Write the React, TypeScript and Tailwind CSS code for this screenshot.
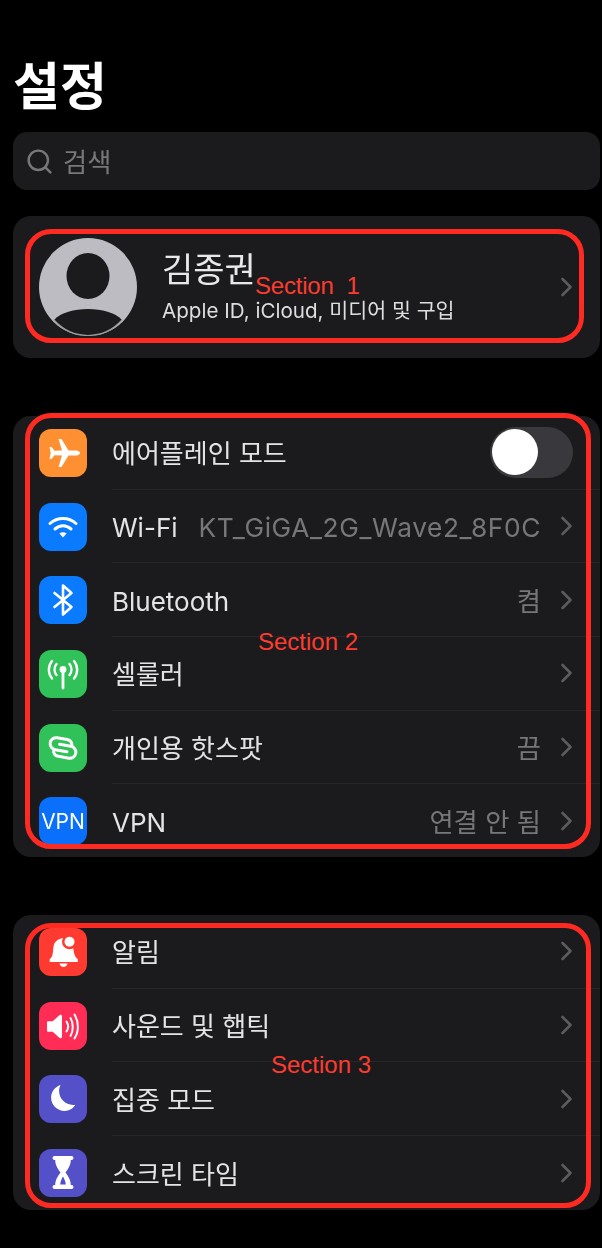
import { Search } from "lucide-react";
import type { ReactNode } from "react";

const font = "font-['Inter','Noto_Sans_CJK_KR',sans-serif]";

function AirplaneIcon() {
  return (
    <svg viewBox="0 0 48 48" className="h-12 w-12" fill="#fff">
      <path d="M41 24c0-1.500-2-2.600-4-2.600h-7.500L22.500 10h-3l3.500 11.400-7.500.4-3-3.800h-2l1.200 6-1.200 6h2l3-3.800 7.500.4-3.500 11.400h3l7-11.400H37c2 0 4-1.100 4-2.600z" />
    </svg>
  );
}

function WifiIcon() {
  return (
    <svg viewBox="0 0 48 48" className="h-12 w-12" fill="none" stroke="#fff" strokeWidth="3" strokeLinecap="round">
      <path d="M11 20.500c7.500-6.700 18.500-6.700 26 0" />
      <path d="M16 26c4.800-4.200 11.200-4.200 16 0" />
      <path d="M24 34.500l-3.600-4c2.200-1.600 5-1.600 7.200 0z" fill="#fff" stroke="none" />
    </svg>
  );
}

function BluetoothIcon() {
  return (
    <svg viewBox="0 0 48 48" className="h-12 w-12" fill="none" stroke="#fff" strokeWidth="2.600" strokeLinecap="round" strokeLinejoin="round">
      <path d="M15.500 17L32.500 31 24 38.500v-29L32.500 17 15.500 31" />
    </svg>
  );
}

function CellularIcon() {
  return (
    <svg viewBox="0 0 48 48" className="h-12 w-12" fill="none" stroke="#fff" strokeWidth="2.400" strokeLinecap="round">
      <circle cx="24" cy="19.500" r="3.400" fill="#fff" stroke="none" />
      <path d="M24 21v17" strokeWidth="2.800" />
      <path d="M17.500 14c-2.600 3.200-2.600 7.800 0 11M30.500 14c2.600 3.200 2.600 7.800 0 11" />
      <path d="M13 11c-4.200 5-4.200 12.500 0 17.500M35 11c4.200 5 4.200 12.500 0 17.500" />
    </svg>
  );
}

function HotspotIcon() {
  return (
    <svg viewBox="0 0 48 48" className="h-12 w-12" fill="none" stroke="#fff" strokeWidth="3" strokeLinecap="round">
      <g transform="rotate(10 24 24)">
        <path d="M28.500 27h-12a6 6 0 0 1 0-12h10a6 6 0 0 1 5.700 4" />
        <path d="M20 21h11.500a6 6 0 0 1 0 12H21a6 6 0 0 1-5.700-4" />
      </g>
    </svg>
  );
}

function BellIcon() {
  return (
    <svg viewBox="0 0 48 48" className="h-12 w-12" fill="#fff">
      <path d="M25 10c4.500 0 8.200 3.600 9 8.500.8 5.500 1 9.500 4.800 12.800v2.700H10.700v-2.700c3.800-3.300 3-7.500 3.800-12.800C15.300 13.600 19.500 10 25 10z" />
      <path d="M20.500 35.500h8c-.5 2.200-2 3.500-4 3.500s-3.500-1.300-4-3.500z" />
      <circle cx="30.500" cy="13.700" r="7.500" fill="#ff3a30" />
      <circle cx="30.500" cy="13.700" r="5" />
    </svg>
  );
}

function SoundIcon() {
  return (
    <svg viewBox="0 0 48 48" className="h-12 w-12" fill="none" stroke="#fff" strokeWidth="2" strokeLinecap="round">
      <path d="M8 20.500c0-.8.500-1.300 1.300-1.300h4.400l6.600-6c1-.9 2.700-.4 2.700.9v20.800c0 1.300-1.700 1.800-2.700.9l-6.600-6H9.300c-.8 0-1.300-.5-1.300-1.300z" fill="#fff" stroke="none" />
      <path d="M27.500 19.500c2 3 2 7 0 10" />
      <path d="M31.500 16c3 5 3 13 0 18" />
      <path d="M35.500 12.500c4.500 7.500 4.500 17 0 24" />
    </svg>
  );
}

function MoonIcon() {
  return (
    <svg viewBox="0 0 48 48" className="h-12 w-12" fill="#fff">
      <path transform="translate(.5 -1)" d="M21 11c-.9 1.900-1.400 4-1.400 6.100 0 7.700 6.200 13.900 13.900 13.900.8 0 1.600 0 2.400-.2C33.600 34.600 29.500 37 25 37c-7.400 0-13.400-6-13.400-13.400C11.600 17.800 15.500 12.800 21 11z" />
    </svg>
  );
}

function HourglassIcon() {
  return (
    <svg viewBox="0 0 48 48" className="h-12 w-12">
      <path d="M15.500 7h17a2 2 0 0 1 0 4h-.7c0 5.400-3 9.200-5.300 12.500 2.300 3.300 5.300 7.100 5.300 12.500h.7a2 2 0 0 1 0 4h-17a2 2 0 0 1 0-4h.7c0-5.400 3-9.200 5.300-12.500-2.300-3.300-5.300-7.100-5.300-12.500h-.7a2 2 0 0 1 0-4z" fill="#fff" />
      <path d="M24 27.500c1 2 2.500 4.500 2.800 8h-5.600c.3-3.500 1.800-6 2.800-8z" fill="#5350c8" />
    </svg>
  );
}

function Chevron() {
  return (
    <svg viewBox="0 0 13 20" className="h-5 w-[13px] shrink-0" fill="none" stroke="#5c5c60" strokeWidth="2.600" strokeLinecap="round" strokeLinejoin="round">
      <path d="M2.500 2l8 8-8 8" />
    </svg>
  );
}

function Outline({ className }: { className: string }) {
  return <div className={`pointer-events-none absolute rounded-[26px] border-[5px] border-[#ff2a22] ${className}`} />;
}

function Label({ children, className }: { children: ReactNode; className: string }) {
  return (
    <span className={`absolute whitespace-pre font-['Liberation_Sans',sans-serif] text-[24px] leading-7 text-[#ff3b30] ${className}`}>
      {children}
    </span>
  );
}

type RowProps = {
  icon: ReactNode;
  color: string;
  title: string;
  value?: string;
  valueClass?: string;
  last?: boolean;
  right?: ReactNode;
};

function Row({ icon, color, title, value, valueClass, last, right }: RowProps) {
  return (
    <div className="flex h-[73.7px] items-center pl-[26px]">
      <div className={`flex h-12 w-12 shrink-0 items-center justify-center overflow-hidden rounded-[12px] blur-[0.3px] ${color}`}>{icon}</div>
      <div className={`ml-[25px] flex h-full min-w-0 flex-1 items-center pr-[27px] ${last ? "" : "border-b border-[#262628]"}`}>
        <span className="pt-[4px] text-[26px] leading-none whitespace-nowrap text-[#e4e4e6] blur-[0.4px]">{title}</span>
        {right ?? (
          <>
            <span className={`ml-auto pt-[4px] text-[26.300px] leading-none whitespace-nowrap text-[#77777b] blur-[0.4px] ${valueClass ?? ""}`}>{value}</span>
            <div className="ml-[19px] flex">
              <Chevron />
            </div>
          </>
        )}
      </div>
    </div>
  );
}

export default function App() {
  return (
    <div className={`h-[1248px] w-[602px] overflow-hidden bg-black pr-[2px] pl-[13px] ${font}`}>
      <h1 className="flex h-[132px] items-end pb-[20px] text-[51px] leading-none font-bold text-white blur-[0.4px]">설정</h1>

      <div className="flex h-[58px] items-center gap-[9px] rounded-[14px] bg-[#1b1b1d] pl-[12px] text-[#77777b]">
        <Search className="blur-[0.3px]" size={29} strokeWidth={2} />
        <span className="pt-[4px] text-[26.300px] leading-none blur-[0.4px]">검색</span>
      </div>

      <section className="relative mt-[26px] flex h-[142px] items-center rounded-[18px] bg-[#1b1b1d] pr-[27px] pl-[26px]">
        <div className="h-[98px] w-[98px] shrink-0">
          <svg viewBox="0 0 98 98" className="h-full w-full">
            <circle cx="49" cy="49" r="49" fill="#bdbcc3" />
            <ellipse cx="49" cy="38" rx="21.500" ry="23" fill="#1b1b1d" />
            <path d="M15 82c7-7.500 20-11 34-11s27 3.500 34 11c-9 10-21 16-34 16S24 92 15 82z" fill="#1b1b1d" />
            <path d="M15 82c9 10 21 15.500 34 15.500S74 92 83 82" fill="none" stroke="#9a9aa0" strokeWidth="1.200" />
          </svg>
        </div>
        <div className="ml-[25px] flex flex-col pb-[2px] blur-[0.4px]">
          <span className="text-[34px] leading-[40px] text-[#e8e8ea]">김종권</span>
          <span className="mt-[9px] text-[20.600px] leading-6 whitespace-nowrap text-[#dededf]">Apple ID, iCloud, 미디어 및 구입</span>
        </div>
        <div className="ml-auto flex">
          <Chevron />
        </div>
        <Outline className="top-[13px] right-[16px] bottom-[15px] left-[12px]" />
        <Label className="top-[56px] left-[242px] tracking-[-0.2px]">Section  1</Label>
      </section>

      <section className="relative mt-[58px] h-[441px] rounded-[18px] bg-[#1b1b1d]">
        <Row
          icon={<AirplaneIcon />}
          color="bg-[#fe9032]"
          title="에어플레인 모드"
          right={
            <div className="ml-auto flex h-[51px] w-[83px] items-center rounded-full bg-[#39393d] pl-[2px]">
              <div className="h-[46px] w-[46px] rounded-full bg-white" />
            </div>
          }
        />
        <Row icon={<WifiIcon />} color="bg-[#0a7aff]" title="Wi-Fi" value="KT_GiGA_2G_Wave2_8F0C" valueClass="tracking-[0.6px]" />
        <Row icon={<BluetoothIcon />} color="bg-[#0a7aff]" title="Bluetooth" value="켬" />
        <Row icon={<CellularIcon />} color="bg-[#30c158]" title="셀룰러" />
        <Row icon={<HotspotIcon />} color="bg-[#30c158]" title="개인용 핫스팟" value="끔" />
        <Row
          icon={<span className="text-[21px] leading-none text-white">VPN</span>}
          color="bg-[#0a6ffa]"
          title="VPN"
          value="연결 안 됨"
          last
        />
        <Outline className="-top-[3px] right-[9px] bottom-[8px] left-[12px]" />
        <Label className="top-[212px] left-[245px]">Section 2</Label>
      </section>

      <section className="relative mt-[58px] h-[295px] rounded-[18px] bg-[#1b1b1d]">
        <Row icon={<BellIcon />} color="bg-[#ff3a30]" title="알림" />
        <Row icon={<SoundIcon />} color="bg-[#ff2d55]" title="사운드 및 햅틱" />
        <Row icon={<MoonIcon />} color="bg-[#5350c8]" title="집중 모드" />
        <Row icon={<HourglassIcon />} color="bg-[#5350c8]" title="스크린 타임" last />
        <Outline className="top-[8px] right-[9px] bottom-[2px] left-[12px]" />
        <Label className="top-[136px] left-[258px]">Section 3</Label>
      </section>
    </div>
  );
}
